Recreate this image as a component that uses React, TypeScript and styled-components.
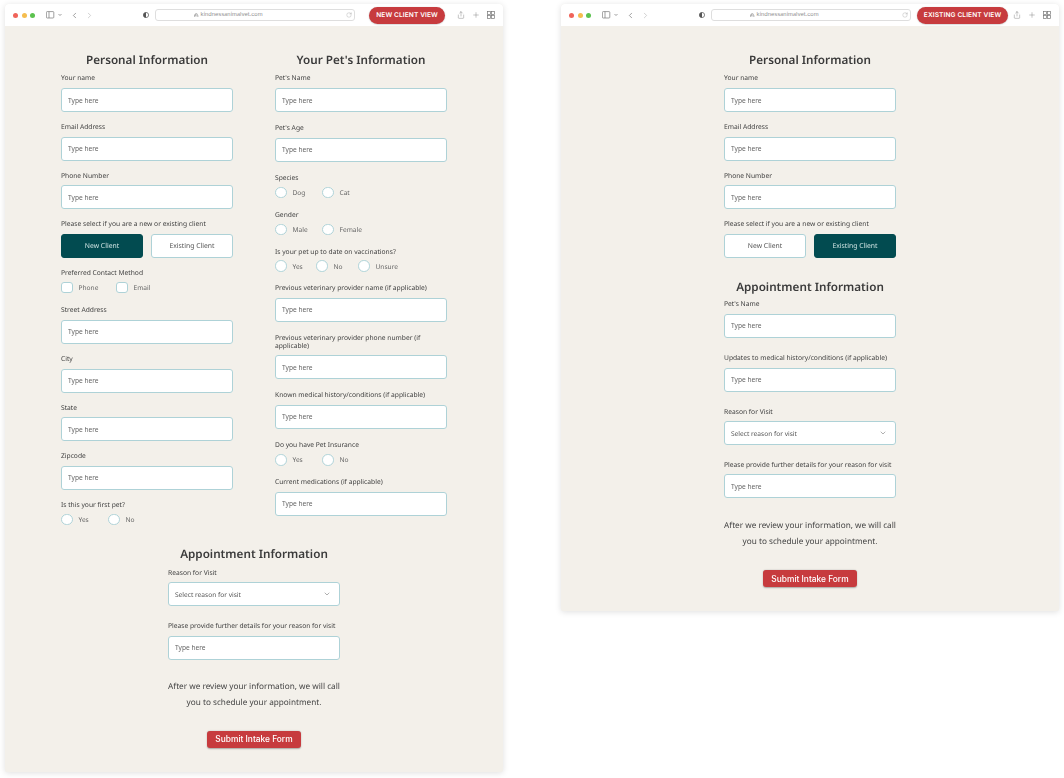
import React from 'react';
import styled, { createGlobalStyle } from 'styled-components';
import { ChevronDown, ChevronLeft, ChevronRight, Lock, Plus, RotateCw, Share } from 'lucide-react';

const GlobalStyle = createGlobalStyle`
  html, body {
    margin: 0;
    background: #fff;
    font-family: "Noto Sans", "Open Sans", sans-serif;
    text-rendering: geometricPrecision;
  }
  * { box-sizing: border-box; }
`;

const Page = styled.div`
  display: flex;
  align-items: flex-start;
  gap: 58px;
  padding: 4px 0 0 5px;
  width: 1064px;
  height: 778px;
  overflow: hidden;
`;

const Browser = styled.div<{ $height: number }>`
  width: 498px;
  height: ${p => p.$height}px;
  display: flex;
  flex-direction: column;
  border-radius: 4px 4px 2px 2px;
  background: #f3f0ea;
  box-shadow: 0 1px 6px rgba(0, 0, 0, 0.13);
  overflow: hidden;
`;

const Toolbar = styled.div`
  height: 22px;
  flex: none;
  display: flex;
  align-items: center;
  background: #fff;
  color: #777;
  padding-left: 8px;
`;

const Dot = styled.span<{ $color: string }>`
  width: 5px;
  height: 5px;
  border-radius: 50%;
  margin-right: 3.7px;
  background: ${p => p.$color};
`;

const SidebarGlyph = styled.svg`
  margin-left: 7px;
  flex: none;
`;

const NavIcons = styled.div`
  display: flex;
  align-items: center;
  gap: 6px;
  margin-left: 8px;
  width: 46px;
  color: #666;
`;

const NavForward = styled.span`
  display: flex;
  color: #b5b5b5;
`;

const ShieldGlyph = styled.svg`
  margin-left: 27px;
  flex: none;
`;

const UrlBar = styled.div`
  width: 200px;
  height: 12px;
  margin-left: 6px;
  padding-left: 38px;
  flex: none;
  display: flex;
  align-items: center;
  position: relative;
  gap: 2px;
  border: 1px solid #dedede;
  border-radius: 3px;
  font-size: 5.6px;
  font-family: "Inter", sans-serif;
  color: #8c8c8c;
`;

const Reload = styled.span`
  position: absolute;
  right: 2px;
  top: 2px;
  display: flex;
  color: #999;
`;

const ViewButton = styled.div<{ $left: number; $width: number }>`
  margin-left: ${p => p.$left}px;
  width: ${p => p.$width}px;
  height: 17px;
  flex: none;
  display: flex;
  align-items: center;
  justify-content: center;
  border-radius: 9px;
  background: #c73b3e;
  color: #fff;
  font-family: "Inter", sans-serif;
  font-weight: 600;
  font-size: 6.6px;
  letter-spacing: 0.1px;
  box-shadow: 0 0.5px 1.5px rgba(0, 0, 0, 0.25);
`;

const ToolIcons = styled.div`
  margin-left: auto;
  padding-right: 8px;
  display: flex;
  align-items: center;
  gap: 7px;
  color: #777;
`;

const FormArea = styled.main`
  flex: 1;
  padding-top: 26px;
  display: flex;
  flex-direction: column;
  align-items: center;
  will-change: opacity;
`;

const Columns = styled.div`
  display: grid;
  grid-template-columns: 172px 172px;
  column-gap: 42px;
`;

const Column = styled.section<{ $gap: number }>`
  width: 172px;
  display: flex;
  flex-direction: column;
  gap: ${p => p.$gap}px;
`;

const Heading = styled.h2<{ $top?: number; $pull: number }>`
  margin: ${p => p.$top ?? 0}px -30px ${p => -p.$pull}px;
  height: 16px;
  line-height: 16px;
  text-align: center;
  font-size: 11.7px;
  font-weight: 600;
  color: #3b3b3b;
  white-space: nowrap;
`;

const Field = styled.div<{ $after?: number }>`
  display: flex;
  flex-direction: column;
  margin-bottom: ${p => p.$after ?? 0}px;
`;

const Label = styled.label<{ $space?: number }>`
  display: block;
  font-size: 6.7px;
  line-height: 8px;
  min-height: 10px;
  padding-top: 1.4px;
  margin-bottom: ${p => p.$space ?? 5}px;
  color: #3f3f3f;
`;

const TextInput = styled.input`
  display: block;
  width: 172px;
  height: 24px;
  padding: 0 6px;
  border: 1px solid #aed2d7;
  border-radius: 3px;
  background: #fff;
  font-family: inherit;
  font-size: 6.6px;
  outline: none;
  &::placeholder { color: #666; opacity: 1; }
`;

const SelectBox = styled.div`
  width: 172px;
  height: 24px;
  padding: 0 8px 0 6px;
  display: flex;
  align-items: center;
  justify-content: space-between;
  border: 1px solid #aed2d7;
  border-radius: 3px;
  background: #fff;
  font-size: 6.6px;
  color: #555;
`;

const ToggleRow = styled.div`
  display: grid;
  grid-template-columns: 82px 82px;
  column-gap: 8px;
`;

const Toggle = styled.div<{ $active: boolean }>`
  height: 24px;
  display: flex;
  align-items: center;
  justify-content: center;
  border-radius: 3px;
  border: 1px solid ${p => (p.$active ? '#024b50' : '#aed2d7')};
  background: ${p => (p.$active ? '#024b50' : '#fff')};
  color: ${p => (p.$active ? '#cfe3e2' : '#555')};
  font-size: 6.8px;
`;

const OptionRow = styled.div`
  display: flex;
  height: 12px;
  align-items: center;
`;

const Option = styled.span<{ $width: number }>`
  width: ${p => p.$width}px;
  display: flex;
  align-items: center;
  gap: 6px;
  font-size: 6.6px;
  color: #666;
`;

const Mark = styled.span<{ $round?: boolean }>`
  width: 11.5px;
  height: 11.5px;
  flex: none;
  background: #fff;
  border: 1px solid #aed2d7;
  border-radius: ${p => (p.$round ? '50%' : '3px')};
`;

const Closing = styled.p<{ $top: number }>`
  margin: ${p => p.$top}px 0 0;
  width: 176px;
  text-align: center;
  font-size: 8.2px;
  line-height: 16px;
  color: #444;
`;

const SubmitButton = styled.button`
  margin-top: 20px;
  width: 94px;
  height: 17px;
  padding: 0;
  border: 0;
  border-radius: 3px;
  background: #c73b3e;
  color: #fff;
  font-family: "Inter", sans-serif;
  font-weight: 500;
  font-size: 8.4px;
  box-shadow: 0 0.5px 1.5px rgba(0, 0, 0, 0.3);
`;

const opts = (labels: string[], widths: number[]) => labels.map((l, i) => ({ l, w: widths[i] }));

const Chrome = ({ title, left, width }: { title: string; left: number; width: number }) => (
  <Toolbar>
    <Dot $color="#f0645a" />
    <Dot $color="#f5bd4f" />
    <Dot $color="#5cc24f" />
    <SidebarGlyph width="16" height="8" viewBox="0 0 16 8" fill="none" stroke="#777" strokeWidth="0.7">
      <rect x="0.4" y="0.6" width="7.4" height="6.4" rx="0.8" />
      <path d="M3 0.6v6.4M12.5 3l1.5 1.5L15.5 3" />
    </SidebarGlyph>
    <NavIcons>
      <ChevronLeft size={9} strokeWidth={1.6} />
      <NavForward><ChevronRight size={9} strokeWidth={1.6} /></NavForward>
    </NavIcons>
    <ShieldGlyph width="6" height="6" viewBox="0 0 6 6">
      <circle cx="3" cy="3" r="2.6" fill="none" stroke="#555" strokeWidth="0.7" />
      <path d="M3 0.4a2.6 2.6 0 0 0 0 5.2z" fill="#555" />
    </ShieldGlyph>
    <UrlBar>
      <Lock size={4.5} strokeWidth={3} />
      kindnessanimalvet.com
      <Reload><RotateCw size={6} strokeWidth={1.4} /></Reload>
    </UrlBar>
    <ViewButton $left={left} $width={width}>{title}</ViewButton>
    <ToolIcons>
      <Share size={8} strokeWidth={1.3} />
      <Plus size={8} strokeWidth={1.3} />
      <svg width="8" height="8" viewBox="0 0 8 8" fill="none" stroke="#777" strokeWidth="0.7">
        <rect x="0.6" y="0.6" width="2.9" height="2.9" />
        <rect x="4.5" y="0.6" width="2.9" height="2.9" />
        <rect x="0.6" y="4.5" width="2.9" height="2.9" />
        <rect x="4.5" y="4.5" width="2.9" height="2.9" />
      </svg>
    </ToolIcons>
  </Toolbar>
);

const Input = ({ label, after }: { label: React.ReactNode; after?: number }) => (
  <Field $after={after}>
    <Label>{label}</Label>
    <TextInput placeholder="Type here" readOnly />
  </Field>
);

const Choice = ({ label, items, round = true, after }: {
  label: string; items: { l: string; w: number }[]; round?: boolean; after?: number;
}) => (
  <Field $after={after}>
    <Label $space={4}>{label}</Label>
    <OptionRow>
      {items.map(i => (
        <Option key={i.l} $width={i.w}><Mark $round={round} />{i.l}</Option>
      ))}
    </OptionRow>
  </Field>
);

const ClientToggle = ({ existing }: { existing: boolean }) => (
  <Field>
    <Label>Please select if you are a new or existing client</Label>
    <ToggleRow>
      <Toggle $active={!existing}>New Client</Toggle>
      <Toggle $active={existing}>Existing Client</Toggle>
    </ToggleRow>
  </Field>
);

const ReasonSelect = () => (
  <Field>
    <Label>Reason for Visit</Label>
    <SelectBox>Select reason for visit<ChevronDown size={8} strokeWidth={1.4} /></SelectBox>
  </Field>
);

const Ending = ({ top }: { top: number }) => (
  <>
    <Closing $top={top}>After we review your information, we will call you to schedule your appointment.</Closing>
    <SubmitButton type="button">Submit Intake Form</SubmitButton>
  </>
);

const NewClient = () => (
  <Browser $height={768}>
    <Chrome title="NEW CLIENT VIEW" left={14} width={76} />
    <FormArea>
      <Columns>
        <Column $gap={9.6}>
          <Heading $pull={4.6}>Personal Information</Heading>
          <Input label="Your name" />
          <Input label="Email Address" />
          <Input label="Phone Number" />
          <ClientToggle existing={false} />
          <Choice label="Preferred Contact Method" round={false} items={opts(['Phone', 'Email'], [55, 50])} after={2} />
          <Input label="Street Address" />
          <Input label="City" />
          <Input label="State" />
          <Input label="Zipcode" />
          <Choice label="Is this your first pet?" items={opts(['Yes', 'No'], [47, 42])} />
        </Column>
        <Column $gap={10.8}>
          <Heading $pull={5.8}>Your Pet's Information</Heading>
          <Input label="Pet's Name" />
          <Input label="Pet's Age" />
          <Choice label="Species" items={opts(['Dog', 'Cat'], [47, 47])} />
          <Choice label="Gender" items={opts(['Male', 'Female'], [47, 47])} />
          <Choice label="Is your pet up to date on vaccinations?" items={opts(['Yes', 'No', 'Unsure'], [41, 42, 50])} />
          <Input label="Previous veterinary provider name (if applicable)" />
          <Input label={<>Previous veterinary provider phone number (if<br />applicable)</>} />
          <Input label="Known medical history/conditions (if applicable)" />
          <Choice label="Do you have Pet Insurance" items={opts(['Yes', 'No'], [47, 47])} />
          <Input label="Current medications (if applicable)" />
        </Column>
      </Columns>
      <Column $gap={14.2}>
        <Heading $top={21} $pull={9.2}>Appointment Information</Heading>
        <ReasonSelect />
        <Input label="Please provide further details for your reason for visit" />
      </Column>
      <Ending top={19} />
    </FormArea>
  </Browser>
);

const ExistingClient = () => (
  <Browser $height={607}>
    <Chrome title="EXISTING CLIENT VIEW" left={6} width={91} />
    <FormArea>
      <Column $gap={9.6}>
        <Heading $pull={4.6}>Personal Information</Heading>
        <Input label="Your name" />
        <Input label="Email Address" />
        <Input label="Phone Number" />
        <ClientToggle existing />
      </Column>
      <Column $gap={14.2}>
        <Heading $top={21.5} $pull={10.7}>Appointment Information</Heading>
        <Input label="Pet's Name" after={1} />
        <Input label="Updates to medical history/conditions (if applicable)" />
        <ReasonSelect />
        <Input label="Please provide further details for your reason for visit" />
      </Column>
      <Ending top={20} />
    </FormArea>
  </Browser>
);

export default function App() {
  return (
    <>
      <GlobalStyle />
      <Page>
        <NewClient />
        <ExistingClient />
      </Page>
    </>
  );
}
